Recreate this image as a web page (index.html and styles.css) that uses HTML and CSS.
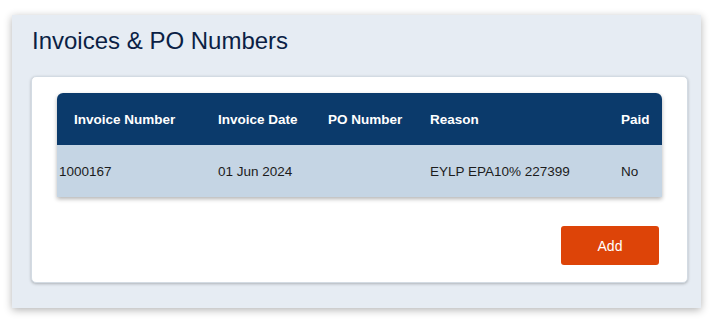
FILE: index.html
```html
<!DOCTYPE html>
<html lang="en">
<head>
    <meta charset="UTF-8">
    <meta name="viewport" content="width=device-width, initial-scale=1.0">
    <title>Invoices &amp; PO Numbers</title>
    <link rel="stylesheet" href="styles.css">
</head>
<body>
    <div class="panel">
        <h1 class="panel-title">Invoices &amp; PO Numbers</h1>

        <div class="card">
            <div class="invoice-table">
                <div class="table-row table-head">
                    <div class="cell first">Invoice Number</div>
                    <div class="cell">Invoice Date</div>
                    <div class="cell">PO Number</div>
                    <div class="cell">Reason</div>
                    <div class="cell">Paid</div>
                </div>
                <div class="table-row table-body">
                    <div class="cell first">1000167</div>
                    <div class="cell">01 Jun 2024</div>
                    <div class="cell"></div>
                    <div class="cell">EYLP EPA10% 227399</div>
                    <div class="cell">No</div>
                </div>
            </div>

            <div class="card-actions">
                <button type="button" class="add-btn">Add</button>
            </div>
        </div>
    </div>
</body>
</html>
```

FILE: styles.css
```css
* {
    margin: 0;
    padding: 0;
    box-sizing: border-box;
}

body {
    background: #ffffff;
    font-family: "Liberation Sans", Arial, sans-serif;
    padding: 15px 18px 15px 12px;
}

.panel {
    background: #e6ecf3;
    width: 689px;
    height: 293px;
    padding: 0 13px 24px 19px;
    box-shadow: 0 2px 8px rgba(0, 0, 0, 0.3);
}

.panel-title {
    color: #0b1f45;
    font-size: 24px;
    font-weight: 400;
    line-height: 30px;
    padding: 11px 0 0 1px;
    height: 61px;
}

.card {
    background: #ffffff;
    border: 1px solid #d3dbe3;
    border-radius: 5px;
    box-shadow: 0 1px 3px rgba(0, 0, 0, 0.25);
    padding: 16px 25px 17px 25px;
}

.invoice-table {
    border-radius: 6px 6px 0 0;
    box-shadow: 0 2px 4px rgba(0, 0, 0, 0.3);
}

.table-row {
    display: grid;
    grid-template-columns: 161px 110px 102px 191px 1fr;
    align-items: center;
    height: 52px;
    font-size: 13.5px;
}

.table-head {
    background: #0b3a6b;
    color: #ffffff;
    font-weight: 700;
    border-radius: 6px 6px 0 0;
}

.table-head .first {
    padding-left: 17px;
}

.table-body {
    background: #c5d5e4;
    color: #1c1c1c;
}

.table-body .first {
    padding-left: 2px;
}

.card-actions {
    display: flex;
    justify-content: flex-end;
    padding: 29px 3px 0 0;
}

.add-btn {
    width: 98px;
    height: 39px;
    background: #dd4408;
    border: none;
    border-radius: 3px;
    color: #ffffff;
    font-family: inherit;
    font-size: 14px;
    cursor: pointer;
}
```
